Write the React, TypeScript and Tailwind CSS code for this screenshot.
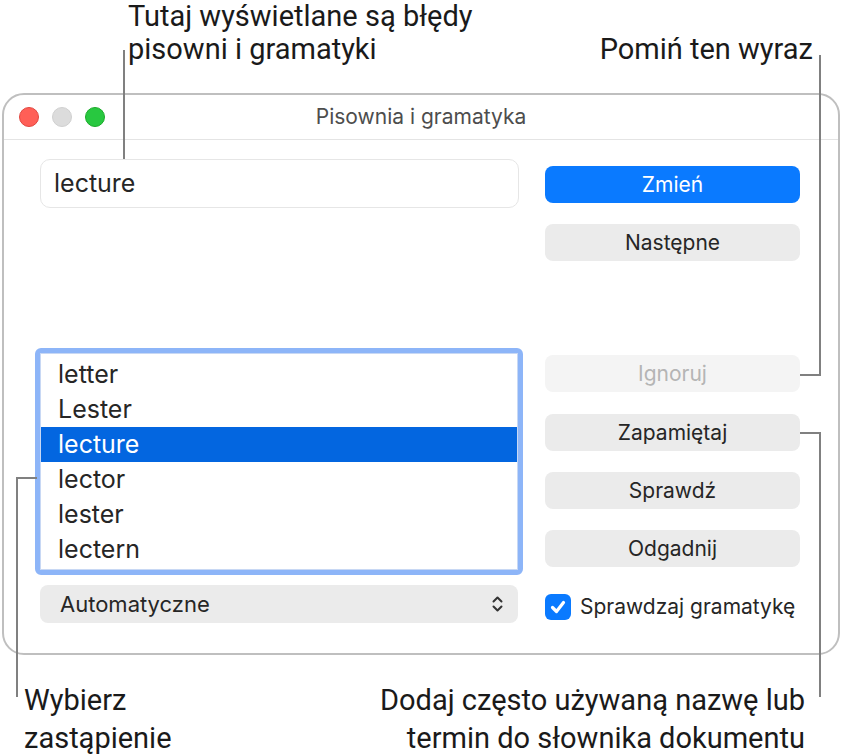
const ui = { fontFamily: "Inter, 'Noto Sans', sans-serif" };
const note = { fontFamily: "Roboto, 'Liberation Sans', sans-serif" };

const suggestions = ["letter", "Lester", "lecture", "lector", "lester", "lectern"];

const Button = ({
  label,
  mt,
  primary,
  disabled,
}: {
  label: string;
  mt: string;
  primary?: boolean;
  disabled?: boolean;
}) => (
  <div
    className={`${mt} h-[37px] rounded-[8px] flex items-center justify-center text-[21px] ${
      primary
        ? "bg-[#0a7aff] text-white"
        : disabled
        ? "bg-[#f4f4f4] text-[#b5b5b5]"
        : "bg-[#ebebeb] text-[#262626]"
    }`}
  >
    {label}
  </div>
);

const Line = ({ className }: { className: string }) => (
  <div className={`absolute bg-[#808080] ${className}`} />
);

export default function App() {
  return (
    <div className="relative w-[843px] h-[755px] bg-white overflow-hidden">
      {/* top labels */}
      <div className="h-[93px] flex justify-between text-[29px] text-[#1a1a1a]" style={note}>
        <div className="pl-[128px] leading-[33px]">
          <div>Tutaj wyświetlane są błędy</div>
          <div>pisowni i gramatyki</div>
        </div>
        <div className="pr-[30px] pt-[33px] leading-[33px]">Pomiń ten wyraz</div>
      </div>

      {/* spelling window */}
      <div
        className="ml-[2px] w-[838px] h-[562px] rounded-[22px] border-2 border-[#bfbfbf] bg-white flex flex-col"
        style={ui}
      >
        <div className="h-[45px] border-b border-[#e4e4e4] relative flex items-center justify-center">
          <div className="absolute left-[15px] top-[12px] flex gap-[13px]">
            <div className="w-[20px] h-[20px] rounded-full bg-[#ff5f57] border border-[#e2463f]" />
            <div className="w-[20px] h-[20px] rounded-full bg-[#dcdcdc] border border-[#d0d0d0]" />
            <div className="w-[20px] h-[20px] rounded-full bg-[#28c840] border border-[#1aab29]" />
          </div>
          <div className="text-[21px] text-[#4d4d4d]">Pisownia i gramatyka</div>
        </div>

        <div className="flex pl-[36px] pt-[19px]">
          {/* left column */}
          <div className="w-[479px] flex flex-col">
            <div className="h-[49px] rounded-[10px] border border-[#e6e6e6] flex items-center pl-[13px] text-[25px] text-[#262626]">
              lecture
            </div>
            <div className="mt-[140px] ml-[-5px] mr-[-4px] h-[227px] rounded-[6px] border-[5px] border-[#8db5f8] bg-white">
              <div className="h-full border border-[#c8d8f4] pt-[3px]">
                {suggestions.map((s, i) => (
                  <div
                    key={i}
                    className={`h-[35px] flex items-center pl-[17px] text-[25px] ${
                      i === 2 ? "bg-[#0366e0] text-white" : "text-[#262626]"
                    }`}
                  >
                    {s}
                  </div>
                ))}
              </div>
            </div>
            <div className="mt-[10px] mr-[1px] h-[38px] rounded-[8px] bg-[#ebebeb] flex items-center justify-between pl-[20px] pr-[15px] text-[22px] text-[#262626]">
              <span>Automatyczne</span>
              <svg width="11" height="18" viewBox="0 0 11 18" fill="none" stroke="#333" strokeWidth="2" strokeLinecap="round" strokeLinejoin="round">
                <path d="M1.5 6.5 L5.5 2.5 L9.5 6.5" />
                <path d="M1.5 11.5 L5.5 15.5 L9.5 11.5" />
              </svg>
            </div>
          </div>

          {/* right column */}
          <div className="ml-[26px] w-[255px] flex flex-col">
            <Button label="Zmień" mt="mt-[7px]" primary />
            <Button label="Następne" mt="mt-[21px]" />
            <Button label="Ignoruj" mt="mt-[94px]" disabled />
            <Button label="Zapamiętaj" mt="mt-[22px]" />
            <Button label="Sprawdź" mt="mt-[21px]" />
            <Button label="Odgadnij" mt="mt-[21px]" />
            <div className="mt-[24px] flex items-center gap-[9px]">
              <div className="w-[26px] h-[26px] rounded-[6px] bg-[#0a7aff] flex items-center justify-center">
                <svg width="18" height="18" viewBox="0 0 18 18" fill="none" stroke="white" strokeWidth="3.2" strokeLinecap="round" strokeLinejoin="round">
                  <path d="M3.5 9.5 L7.5 13.5 L14.5 4.5" />
                </svg>
              </div>
              <span className="text-[21px] text-[#262626]">Sprawdzaj gramatykę</span>
            </div>
          </div>
        </div>
      </div>

      {/* bottom labels */}
      <div className="mt-[26px] flex justify-between text-[29px] leading-[38px] text-[#1a1a1a]" style={note}>
        <div className="pl-[24px]">
          <div>Wybierz</div>
          <div>zastąpienie</div>
        </div>
        <div className="pr-[38px] text-right">
          <div>Dodaj często używaną nazwę lub</div>
          <div>termin do słownika dokumentu</div>
        </div>
      </div>

      {/* leader lines */}
      <Line className="left-[123px] top-[50px] w-[2px] h-[109px]" />
      <Line className="left-[819px] top-[55px] w-[2px] h-[321px]" />
      <Line className="left-[800px] top-[374px] w-[21px] h-[2px]" />
      <Line className="left-[800px] top-[432px] w-[21px] h-[2px]" />
      <Line className="left-[819px] top-[432px] w-[2px] h-[265px]" />
      <Line className="left-[16px] top-[477px] w-[21px] h-[2px]" />
      <Line className="left-[16px] top-[477px] w-[2px] h-[220px]" />
    </div>
  );
}
